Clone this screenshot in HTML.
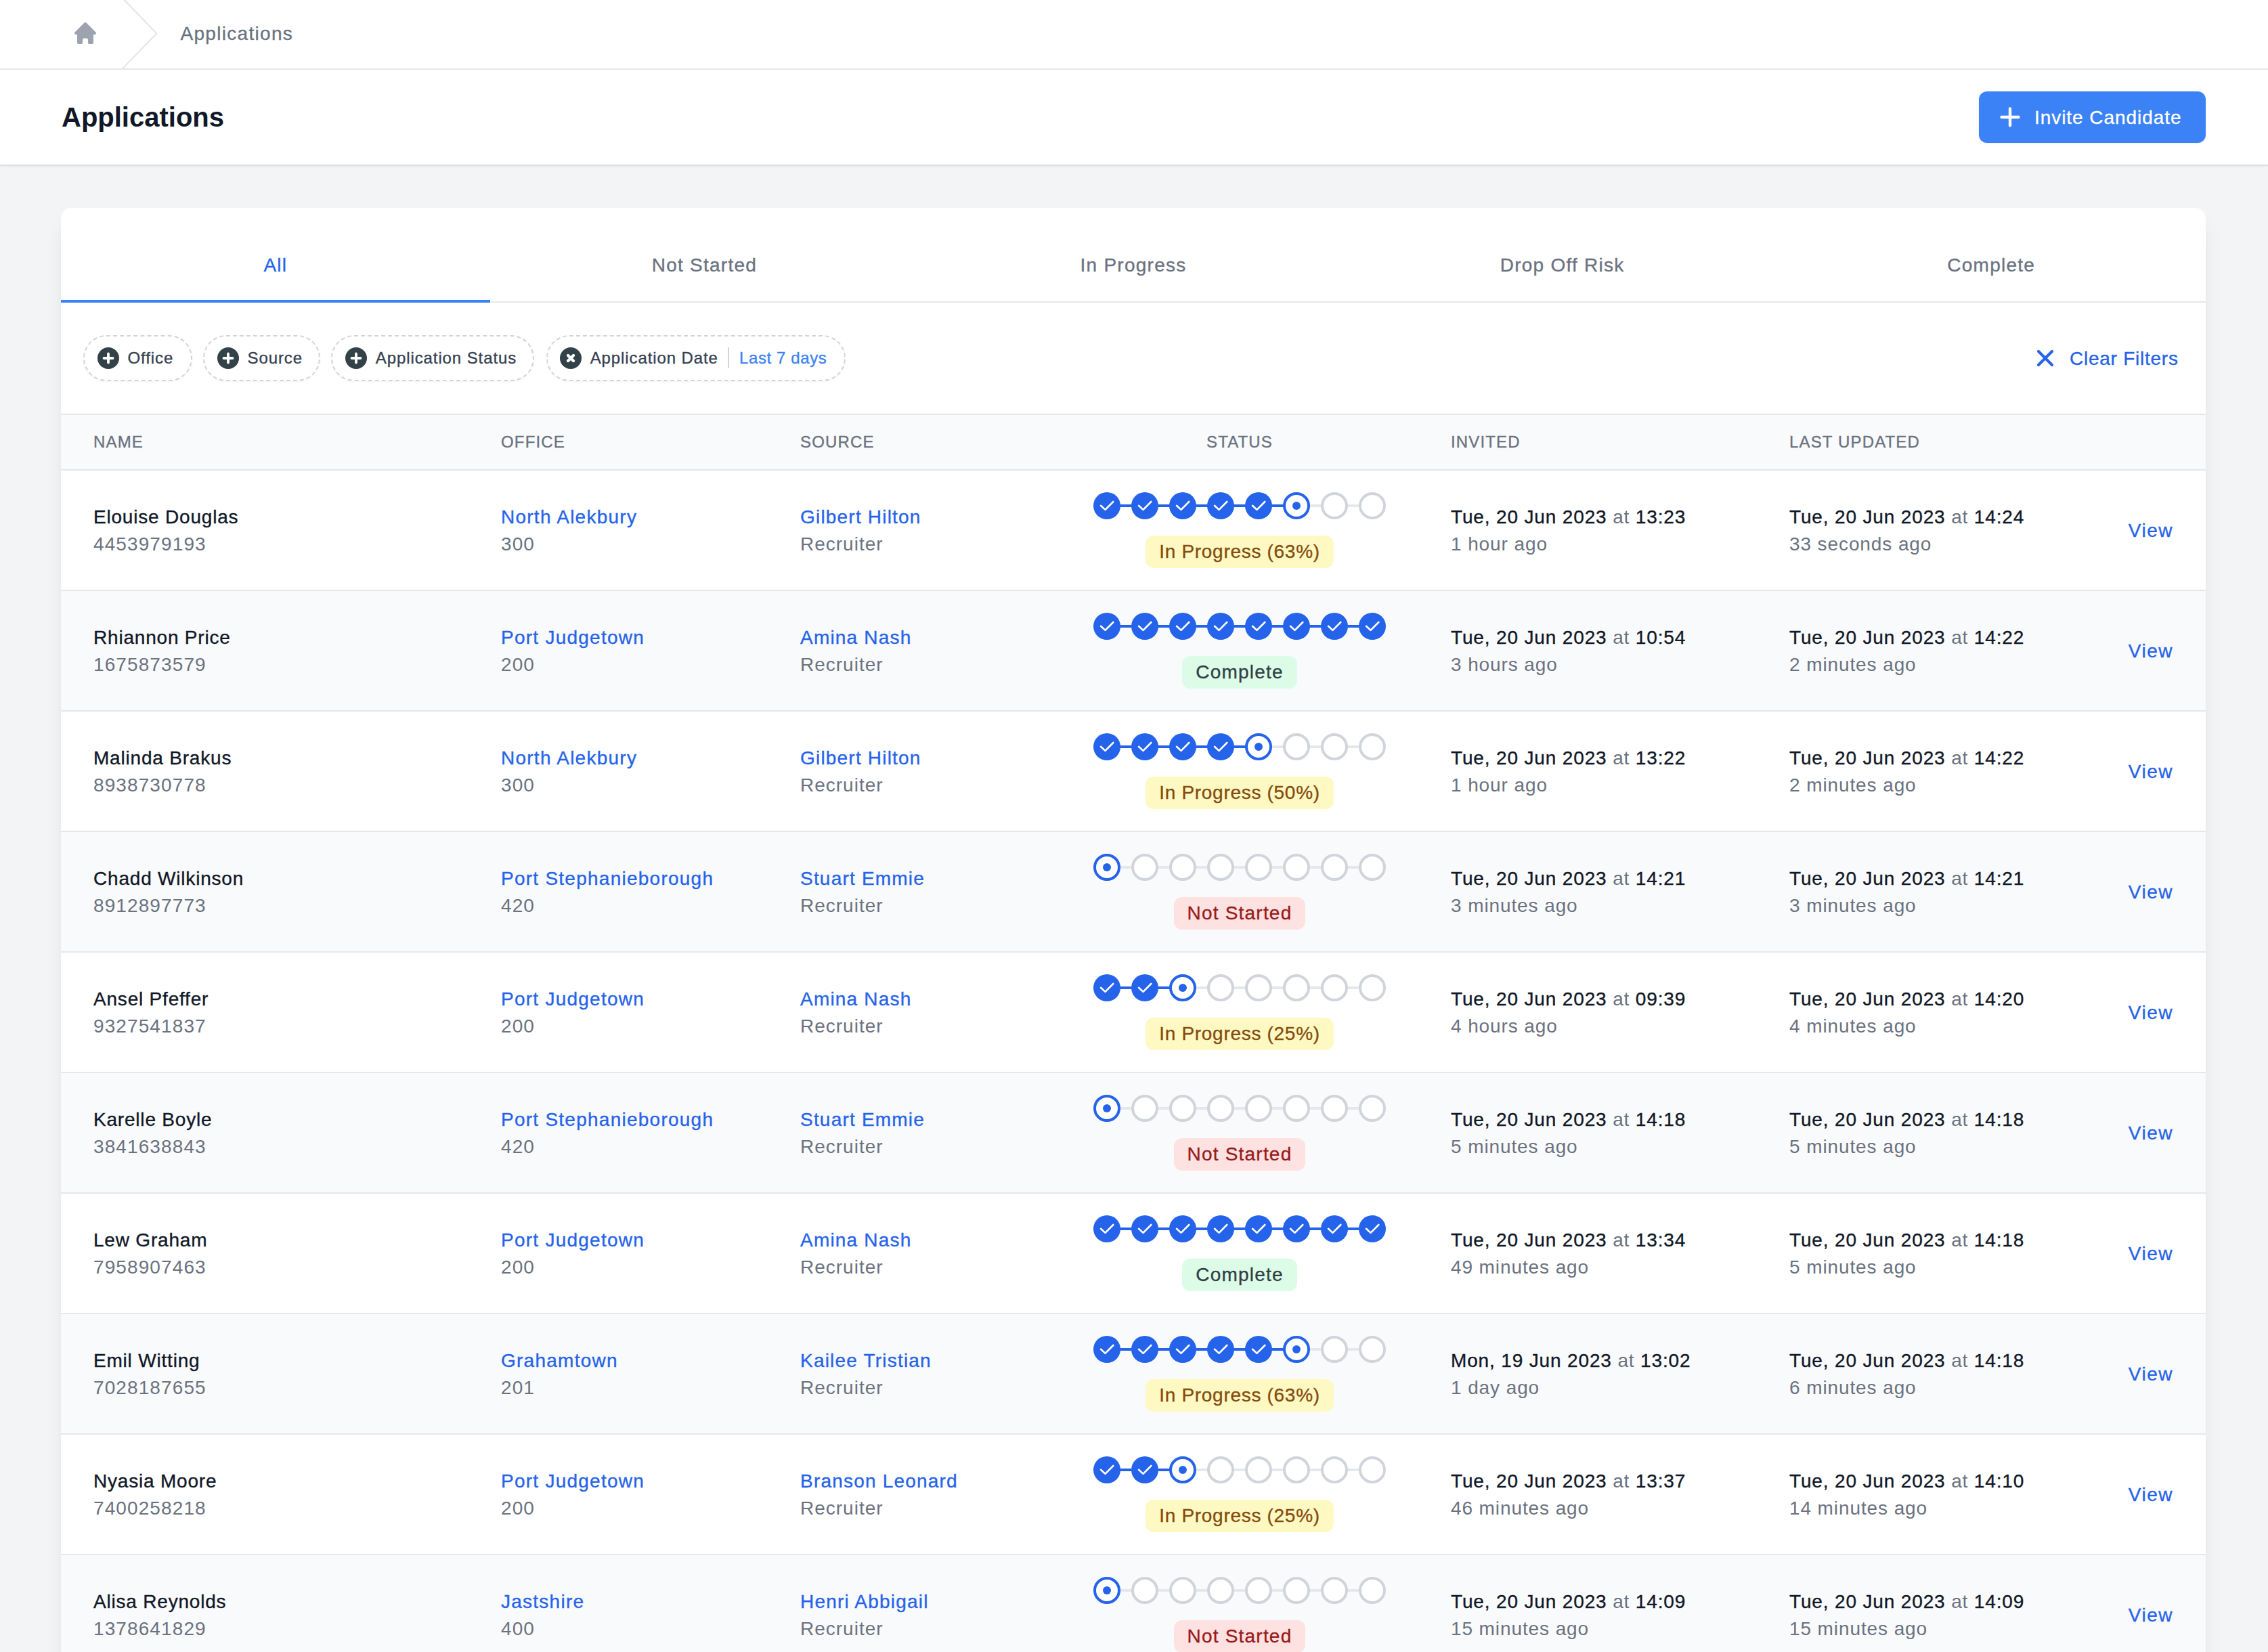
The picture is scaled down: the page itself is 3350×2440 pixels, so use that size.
<!DOCTYPE html><html><head><meta charset="utf-8"><style>
html,body{margin:0;padding:0;width:3350px;height:2440px;overflow:hidden;background:#f3f4f6;}
#root{position:relative;width:3350px;height:2440px;overflow:hidden;}
body{width:3350px;height:2440px;overflow:hidden;position:relative;background:#f3f4f6;font-family:"Liberation Sans", sans-serif;}
.t{position:absolute;white-space:nowrap;}
#nav{position:absolute;left:0;top:0;width:3350px;height:101px;background:#fff;border-bottom:2px solid #e5e7eb;}
#hdr{position:absolute;left:0;top:103px;width:3350px;height:140px;background:#fff;border-bottom:2px solid #dcdfe3;box-shadow:0 2px 3px rgba(0,0,0,0.03);}
#btn{position:absolute;left:2923px;top:135px;width:335px;height:76px;background:#3b82f6;border-radius:12px;box-shadow:0 1px 3px rgba(0,0,0,0.08);}
#card{position:absolute;left:90px;top:307px;width:3168px;height:2200px;background:#fff;border-radius:16px;box-shadow:0 20px 30px -6px rgba(0,0,0,0.09),0 8px 12px -8px rgba(0,0,0,0.1);}
.chip{position:absolute;top:495px;height:68px;border:2px dashed #d1d5db;border-radius:34px;background:#fff;box-shadow:0 1px 3px rgba(0,0,0,0.05);box-sizing:border-box;}
.ci{position:absolute;}
.bw{position:absolute;left:831px;width:2000px;text-align:center;height:48px;}
.badge{-webkit-text-stroke:0.35px currentColor;display:inline-block;height:48px;line-height:48px;font-size:28px;padding:0 20px;border-radius:12px;white-space:nowrap;}
</style></head><body><div id="root"><div id="nav"></div>
<svg style="position:absolute;left:0;top:0" width="300" height="103"><polyline points="182.7,-1 231.3,49.5 180.3,102" fill="none" stroke="#e5e7eb" stroke-width="2.3"/></svg>
<svg style="position:absolute;left:106px;top:29px" width="40" height="40" viewBox="0 0 20 20" fill="#9ca3af"><path fill-rule="evenodd" d="M9.293 2.293a1 1 0 011.414 0l7 7A1 1 0 0117 11h-1v6a1 1 0 01-1 1h-2a1 1 0 01-1-1v-2a1.2 1.2 0 00-1.2-1.2H9.2a1.2 1.2 0 00-1.2 1.2v2a1 1 0 01-1 1H5a1 1 0 01-1-1v-6H3a1 1 0 01-.707-1.707l7-7z" clip-rule="evenodd"/></svg>
<div class="t" style="left:266.5px;top:29.80px;font-size:28px;line-height:39px;color:#6b7280;font-weight:400;letter-spacing:1.3px;-webkit-text-stroke:0.35px currentColor;">Applications</div>
<div id="hdr"></div>
<div class="t" style="left:91px;top:145.14px;font-size:40px;line-height:56px;color:#111827;font-weight:700;letter-spacing:0px;">Applications</div>
<div id="btn"></div>
<svg style="position:absolute;left:2953px;top:157px" width="32" height="32" viewBox="0 0 32 32"><path d="M16 3.5v25M3.5 16h25" stroke="#fff" stroke-width="4.3" stroke-linecap="round" fill="none"/></svg>
<div class="t" style="left:3005px;top:153.80px;font-size:28px;line-height:39px;color:#ffffff;font-weight:400;letter-spacing:0.95px;-webkit-text-stroke:0.35px currentColor;">Invite Candidate</div>
<div id="card"></div>
<div class="t" style="left:-593.2px;width:2000px;text-align:center;top:371.80px;font-size:28px;line-height:39px;color:#2563eb;font-weight:400;letter-spacing:1.25px;-webkit-text-stroke:0.35px currentColor;">All</div>
<div class="t" style="left:40.40000000000009px;width:2000px;text-align:center;top:371.80px;font-size:28px;line-height:39px;color:#6b7280;font-weight:400;letter-spacing:1.25px;-webkit-text-stroke:0.35px currentColor;">Not Started</div>
<div class="t" style="left:674.0px;width:2000px;text-align:center;top:371.80px;font-size:28px;line-height:39px;color:#6b7280;font-weight:400;letter-spacing:1.25px;-webkit-text-stroke:0.35px currentColor;">In Progress</div>
<div class="t" style="left:1307.6000000000004px;width:2000px;text-align:center;top:371.80px;font-size:28px;line-height:39px;color:#6b7280;font-weight:400;letter-spacing:1.25px;-webkit-text-stroke:0.35px currentColor;">Drop Off Risk</div>
<div class="t" style="left:1941.2000000000003px;width:2000px;text-align:center;top:371.80px;font-size:28px;line-height:39px;color:#6b7280;font-weight:400;letter-spacing:1.25px;-webkit-text-stroke:0.35px currentColor;">Complete</div>
<div style="position:absolute;left:90px;top:445px;width:3168px;height:2px;background:#e5e7eb"></div>
<div style="position:absolute;left:90px;top:443px;width:633.6px;height:4px;background:#3b82f6"></div>
<div class="chip" style="left:122.5px;width:161.3px"></div>
<svg class="ci" style="left:144px;top:513px" width="32" height="32" viewBox="0 0 32 32"><circle cx="16" cy="16" r="16" fill="#334249"/><path d="M16 9.5v13M9.5 16h13" stroke="#fff" stroke-width="3.8" stroke-linecap="round"/></svg>
<div class="t" style="left:188.5px;top:511.68px;font-size:24px;line-height:34px;color:#374151;font-weight:400;letter-spacing:0.9px;-webkit-text-stroke:0.35px currentColor;">Office</div>
<div class="chip" style="left:299.5px;width:173.3px"></div>
<svg class="ci" style="left:321px;top:513px" width="32" height="32" viewBox="0 0 32 32"><circle cx="16" cy="16" r="16" fill="#334249"/><path d="M16 9.5v13M9.5 16h13" stroke="#fff" stroke-width="3.8" stroke-linecap="round"/></svg>
<div class="t" style="left:365.5px;top:511.68px;font-size:24px;line-height:34px;color:#374151;font-weight:400;letter-spacing:0.9px;-webkit-text-stroke:0.35px currentColor;">Source</div>
<div class="chip" style="left:488.8px;width:300.0px"></div>
<svg class="ci" style="left:510px;top:513px" width="32" height="32" viewBox="0 0 32 32"><circle cx="16" cy="16" r="16" fill="#334249"/><path d="M16 9.5v13M9.5 16h13" stroke="#fff" stroke-width="3.8" stroke-linecap="round"/></svg>
<div class="t" style="left:554.8px;top:511.68px;font-size:24px;line-height:34px;color:#374151;font-weight:400;letter-spacing:0.9px;-webkit-text-stroke:0.35px currentColor;">Application Status</div>
<div class="chip" style="left:806.7px;width:441.9px"></div>
<svg class="ci" style="left:827px;top:513px" width="32" height="32" viewBox="0 0 32 32"><circle cx="16" cy="16" r="16" fill="#334249"/><path d="M12 12l8 8M20 12l-8 8" stroke="#fff" stroke-width="4.4" stroke-linecap="round"/></svg>
<div class="t" style="left:871.7px;top:511.68px;font-size:24px;line-height:34px;color:#374151;font-weight:400;letter-spacing:0.9px;-webkit-text-stroke:0.35px currentColor;">Application Date</div>
<div style="position:absolute;left:1075px;top:513px;width:2px;height:31px;background:#d1d5db"></div>
<div class="t" style="left:1092px;top:511.68px;font-size:24px;line-height:34px;color:#3b82f6;font-weight:400;letter-spacing:0.6px;-webkit-text-stroke:0.35px currentColor;">Last 7 days</div>
<svg style="position:absolute;left:3005px;top:513px" width="32" height="32" viewBox="0 0 32 32"><path d="M6 6l20 20M26 6L6 26" stroke="#2563eb" stroke-width="4.2" stroke-linecap="round"/></svg>
<div class="t" style="left:3057px;top:509.80px;font-size:28px;line-height:39px;color:#2563eb;font-weight:400;letter-spacing:0.75px;-webkit-text-stroke:0.35px currentColor;">Clear Filters</div>
<div style="position:absolute;left:90px;top:611px;width:3168px;height:80px;border-top:2px solid #e5e7eb;border-bottom:2px solid #e5e7eb;background:#f9fafb"></div>
<div class="t" style="left:138px;top:635.68px;font-size:24px;line-height:34px;color:#6b7280;font-weight:400;letter-spacing:1.15px;-webkit-text-stroke:0.35px currentColor;">NAME</div>
<div class="t" style="left:740px;top:635.68px;font-size:24px;line-height:34px;color:#6b7280;font-weight:400;letter-spacing:1.15px;-webkit-text-stroke:0.35px currentColor;">OFFICE</div>
<div class="t" style="left:1182px;top:635.68px;font-size:24px;line-height:34px;color:#6b7280;font-weight:400;letter-spacing:1.15px;-webkit-text-stroke:0.35px currentColor;">SOURCE</div>
<div class="t" style="left:831px;width:2000px;text-align:center;top:635.68px;font-size:24px;line-height:34px;color:#6b7280;font-weight:400;letter-spacing:1.15px;-webkit-text-stroke:0.35px currentColor;">STATUS</div>
<div class="t" style="left:2143px;top:635.68px;font-size:24px;line-height:34px;color:#6b7280;font-weight:400;letter-spacing:1.15px;-webkit-text-stroke:0.35px currentColor;">INVITED</div>
<div class="t" style="left:2643px;top:635.68px;font-size:24px;line-height:34px;color:#6b7280;font-weight:400;letter-spacing:1.15px;-webkit-text-stroke:0.35px currentColor;">LAST UPDATED</div>
<div style="position:absolute;left:90px;top:695px;width:3168px;height:176px;background:#ffffff;border-bottom:2px solid #e5e7eb"></div>
<div class="t" style="left:138px;top:743.80px;font-size:28px;line-height:39px;color:#111827;font-weight:400;letter-spacing:0.8px;-webkit-text-stroke:0.35px currentColor;">Elouise Douglas</div>
<div class="t" style="left:138px;top:783.80px;font-size:28px;line-height:39px;color:#6b7280;font-weight:400;letter-spacing:1.1px;">4453979193</div>
<div class="t" style="left:740px;top:743.80px;font-size:28px;line-height:39px;color:#2563eb;font-weight:400;letter-spacing:1.25px;-webkit-text-stroke:0.35px currentColor;">North Alekbury</div>
<div class="t" style="left:740px;top:783.80px;font-size:28px;line-height:39px;color:#6b7280;font-weight:400;letter-spacing:1.1px;">300</div>
<div class="t" style="left:1182px;top:743.80px;font-size:28px;line-height:39px;color:#2563eb;font-weight:400;letter-spacing:1.2px;-webkit-text-stroke:0.35px currentColor;">Gilbert Hilton</div>
<div class="t" style="left:1182px;top:783.80px;font-size:28px;line-height:39px;color:#6b7280;font-weight:400;letter-spacing:1.0px;">Recruiter</div>
<svg style="position:absolute;left:1611.0px;top:723px" width="440" height="48" viewBox="0 0 440 48"><rect x="43" y="22" width="18" height="4" fill="#2563eb"/><rect x="99" y="22" width="18" height="4" fill="#2563eb"/><rect x="155" y="22" width="18" height="4" fill="#2563eb"/><rect x="211" y="22" width="18" height="4" fill="#2563eb"/><rect x="267" y="22" width="18" height="4" fill="#2563eb"/><rect x="323" y="22" width="18" height="4" fill="#e5e7eb"/><rect x="379" y="22" width="18" height="4" fill="#e5e7eb"/><circle cx="24" cy="24" r="20" fill="#2563eb"/><path d="M15 23.8l6.5 6.1 11.8-11.9" stroke="#fff" stroke-width="2.6" stroke-linecap="round" stroke-linejoin="round" fill="none"/><circle cx="80" cy="24" r="20" fill="#2563eb"/><path d="M71 23.8l6.5 6.1 11.8-11.9" stroke="#fff" stroke-width="2.6" stroke-linecap="round" stroke-linejoin="round" fill="none"/><circle cx="136" cy="24" r="20" fill="#2563eb"/><path d="M127 23.8l6.5 6.1 11.8-11.9" stroke="#fff" stroke-width="2.6" stroke-linecap="round" stroke-linejoin="round" fill="none"/><circle cx="192" cy="24" r="20" fill="#2563eb"/><path d="M183 23.8l6.5 6.1 11.8-11.9" stroke="#fff" stroke-width="2.6" stroke-linecap="round" stroke-linejoin="round" fill="none"/><circle cx="248" cy="24" r="20" fill="#2563eb"/><path d="M239 23.8l6.5 6.1 11.8-11.9" stroke="#fff" stroke-width="2.6" stroke-linecap="round" stroke-linejoin="round" fill="none"/><circle cx="304" cy="24" r="18" fill="#fff" stroke="#2563eb" stroke-width="4"/><circle cx="304" cy="24" r="6" fill="#2563eb"/><circle cx="360" cy="24" r="18" fill="#fff" stroke="#d1d5db" stroke-width="4"/><circle cx="416" cy="24" r="18" fill="#fff" stroke="#d1d5db" stroke-width="4"/></svg>
<div class="bw" style="top:791px"><span class="badge" style="background:#fef9c3;color:#854d0e;letter-spacing:0.7px">In Progress (63%)</span></div>
<div class="t" style="left:2143px;top:743.80px;font-size:28px;line-height:39px;color:#111827;font-weight:400;letter-spacing:0.85px;-webkit-text-stroke:0.35px currentColor;">Tue, 20 Jun 2023 <span style="color:#6b7280;-webkit-text-stroke:0">at</span> 13:23</div>
<div class="t" style="left:2143px;top:783.80px;font-size:28px;line-height:39px;color:#6b7280;font-weight:400;letter-spacing:0.9px;">1 hour ago</div>
<div class="t" style="left:2643px;top:743.80px;font-size:28px;line-height:39px;color:#111827;font-weight:400;letter-spacing:0.85px;-webkit-text-stroke:0.35px currentColor;">Tue, 20 Jun 2023 <span style="color:#6b7280;-webkit-text-stroke:0">at</span> 14:24</div>
<div class="t" style="left:2643px;top:783.80px;font-size:28px;line-height:39px;color:#6b7280;font-weight:400;letter-spacing:0.9px;">33 seconds ago</div>
<div class="t" style="right:140px;top:763.80px;font-size:28px;line-height:39px;color:#2563eb;font-weight:400;letter-spacing:1.5px;-webkit-text-stroke:0.35px currentColor;">View</div>
<div style="position:absolute;left:90px;top:873px;width:3168px;height:176px;background:#f9fafb;border-bottom:2px solid #e5e7eb"></div>
<div class="t" style="left:138px;top:921.80px;font-size:28px;line-height:39px;color:#111827;font-weight:400;letter-spacing:0.8px;-webkit-text-stroke:0.35px currentColor;">Rhiannon Price</div>
<div class="t" style="left:138px;top:961.80px;font-size:28px;line-height:39px;color:#6b7280;font-weight:400;letter-spacing:1.1px;">1675873579</div>
<div class="t" style="left:740px;top:921.80px;font-size:28px;line-height:39px;color:#2563eb;font-weight:400;letter-spacing:1.25px;-webkit-text-stroke:0.35px currentColor;">Port Judgetown</div>
<div class="t" style="left:740px;top:961.80px;font-size:28px;line-height:39px;color:#6b7280;font-weight:400;letter-spacing:1.1px;">200</div>
<div class="t" style="left:1182px;top:921.80px;font-size:28px;line-height:39px;color:#2563eb;font-weight:400;letter-spacing:1.2px;-webkit-text-stroke:0.35px currentColor;">Amina Nash</div>
<div class="t" style="left:1182px;top:961.80px;font-size:28px;line-height:39px;color:#6b7280;font-weight:400;letter-spacing:1.0px;">Recruiter</div>
<svg style="position:absolute;left:1611.0px;top:901px" width="440" height="48" viewBox="0 0 440 48"><rect x="43" y="22" width="18" height="4" fill="#2563eb"/><rect x="99" y="22" width="18" height="4" fill="#2563eb"/><rect x="155" y="22" width="18" height="4" fill="#2563eb"/><rect x="211" y="22" width="18" height="4" fill="#2563eb"/><rect x="267" y="22" width="18" height="4" fill="#2563eb"/><rect x="323" y="22" width="18" height="4" fill="#2563eb"/><rect x="379" y="22" width="18" height="4" fill="#2563eb"/><circle cx="24" cy="24" r="20" fill="#2563eb"/><path d="M15 23.8l6.5 6.1 11.8-11.9" stroke="#fff" stroke-width="2.6" stroke-linecap="round" stroke-linejoin="round" fill="none"/><circle cx="80" cy="24" r="20" fill="#2563eb"/><path d="M71 23.8l6.5 6.1 11.8-11.9" stroke="#fff" stroke-width="2.6" stroke-linecap="round" stroke-linejoin="round" fill="none"/><circle cx="136" cy="24" r="20" fill="#2563eb"/><path d="M127 23.8l6.5 6.1 11.8-11.9" stroke="#fff" stroke-width="2.6" stroke-linecap="round" stroke-linejoin="round" fill="none"/><circle cx="192" cy="24" r="20" fill="#2563eb"/><path d="M183 23.8l6.5 6.1 11.8-11.9" stroke="#fff" stroke-width="2.6" stroke-linecap="round" stroke-linejoin="round" fill="none"/><circle cx="248" cy="24" r="20" fill="#2563eb"/><path d="M239 23.8l6.5 6.1 11.8-11.9" stroke="#fff" stroke-width="2.6" stroke-linecap="round" stroke-linejoin="round" fill="none"/><circle cx="304" cy="24" r="20" fill="#2563eb"/><path d="M295 23.8l6.5 6.1 11.8-11.9" stroke="#fff" stroke-width="2.6" stroke-linecap="round" stroke-linejoin="round" fill="none"/><circle cx="360" cy="24" r="20" fill="#2563eb"/><path d="M351 23.8l6.5 6.1 11.8-11.9" stroke="#fff" stroke-width="2.6" stroke-linecap="round" stroke-linejoin="round" fill="none"/><circle cx="416" cy="24" r="20" fill="#2563eb"/><path d="M407 23.8l6.5 6.1 11.8-11.9" stroke="#fff" stroke-width="2.6" stroke-linecap="round" stroke-linejoin="round" fill="none"/></svg>
<div class="bw" style="top:969px"><span class="badge" style="background:#dcfce7;color:#313e46;letter-spacing:1.2px">Complete</span></div>
<div class="t" style="left:2143px;top:921.80px;font-size:28px;line-height:39px;color:#111827;font-weight:400;letter-spacing:0.85px;-webkit-text-stroke:0.35px currentColor;">Tue, 20 Jun 2023 <span style="color:#6b7280;-webkit-text-stroke:0">at</span> 10:54</div>
<div class="t" style="left:2143px;top:961.80px;font-size:28px;line-height:39px;color:#6b7280;font-weight:400;letter-spacing:0.9px;">3 hours ago</div>
<div class="t" style="left:2643px;top:921.80px;font-size:28px;line-height:39px;color:#111827;font-weight:400;letter-spacing:0.85px;-webkit-text-stroke:0.35px currentColor;">Tue, 20 Jun 2023 <span style="color:#6b7280;-webkit-text-stroke:0">at</span> 14:22</div>
<div class="t" style="left:2643px;top:961.80px;font-size:28px;line-height:39px;color:#6b7280;font-weight:400;letter-spacing:0.9px;">2 minutes ago</div>
<div class="t" style="right:140px;top:941.80px;font-size:28px;line-height:39px;color:#2563eb;font-weight:400;letter-spacing:1.5px;-webkit-text-stroke:0.35px currentColor;">View</div>
<div style="position:absolute;left:90px;top:1051px;width:3168px;height:176px;background:#ffffff;border-bottom:2px solid #e5e7eb"></div>
<div class="t" style="left:138px;top:1099.80px;font-size:28px;line-height:39px;color:#111827;font-weight:400;letter-spacing:0.8px;-webkit-text-stroke:0.35px currentColor;">Malinda Brakus</div>
<div class="t" style="left:138px;top:1139.80px;font-size:28px;line-height:39px;color:#6b7280;font-weight:400;letter-spacing:1.1px;">8938730778</div>
<div class="t" style="left:740px;top:1099.80px;font-size:28px;line-height:39px;color:#2563eb;font-weight:400;letter-spacing:1.25px;-webkit-text-stroke:0.35px currentColor;">North Alekbury</div>
<div class="t" style="left:740px;top:1139.80px;font-size:28px;line-height:39px;color:#6b7280;font-weight:400;letter-spacing:1.1px;">300</div>
<div class="t" style="left:1182px;top:1099.80px;font-size:28px;line-height:39px;color:#2563eb;font-weight:400;letter-spacing:1.2px;-webkit-text-stroke:0.35px currentColor;">Gilbert Hilton</div>
<div class="t" style="left:1182px;top:1139.80px;font-size:28px;line-height:39px;color:#6b7280;font-weight:400;letter-spacing:1.0px;">Recruiter</div>
<svg style="position:absolute;left:1611.0px;top:1079px" width="440" height="48" viewBox="0 0 440 48"><rect x="43" y="22" width="18" height="4" fill="#2563eb"/><rect x="99" y="22" width="18" height="4" fill="#2563eb"/><rect x="155" y="22" width="18" height="4" fill="#2563eb"/><rect x="211" y="22" width="18" height="4" fill="#2563eb"/><rect x="267" y="22" width="18" height="4" fill="#e5e7eb"/><rect x="323" y="22" width="18" height="4" fill="#e5e7eb"/><rect x="379" y="22" width="18" height="4" fill="#e5e7eb"/><circle cx="24" cy="24" r="20" fill="#2563eb"/><path d="M15 23.8l6.5 6.1 11.8-11.9" stroke="#fff" stroke-width="2.6" stroke-linecap="round" stroke-linejoin="round" fill="none"/><circle cx="80" cy="24" r="20" fill="#2563eb"/><path d="M71 23.8l6.5 6.1 11.8-11.9" stroke="#fff" stroke-width="2.6" stroke-linecap="round" stroke-linejoin="round" fill="none"/><circle cx="136" cy="24" r="20" fill="#2563eb"/><path d="M127 23.8l6.5 6.1 11.8-11.9" stroke="#fff" stroke-width="2.6" stroke-linecap="round" stroke-linejoin="round" fill="none"/><circle cx="192" cy="24" r="20" fill="#2563eb"/><path d="M183 23.8l6.5 6.1 11.8-11.9" stroke="#fff" stroke-width="2.6" stroke-linecap="round" stroke-linejoin="round" fill="none"/><circle cx="248" cy="24" r="18" fill="#fff" stroke="#2563eb" stroke-width="4"/><circle cx="248" cy="24" r="6" fill="#2563eb"/><circle cx="304" cy="24" r="18" fill="#fff" stroke="#d1d5db" stroke-width="4"/><circle cx="360" cy="24" r="18" fill="#fff" stroke="#d1d5db" stroke-width="4"/><circle cx="416" cy="24" r="18" fill="#fff" stroke="#d1d5db" stroke-width="4"/></svg>
<div class="bw" style="top:1147px"><span class="badge" style="background:#fef9c3;color:#854d0e;letter-spacing:0.7px">In Progress (50%)</span></div>
<div class="t" style="left:2143px;top:1099.80px;font-size:28px;line-height:39px;color:#111827;font-weight:400;letter-spacing:0.85px;-webkit-text-stroke:0.35px currentColor;">Tue, 20 Jun 2023 <span style="color:#6b7280;-webkit-text-stroke:0">at</span> 13:22</div>
<div class="t" style="left:2143px;top:1139.80px;font-size:28px;line-height:39px;color:#6b7280;font-weight:400;letter-spacing:0.9px;">1 hour ago</div>
<div class="t" style="left:2643px;top:1099.80px;font-size:28px;line-height:39px;color:#111827;font-weight:400;letter-spacing:0.85px;-webkit-text-stroke:0.35px currentColor;">Tue, 20 Jun 2023 <span style="color:#6b7280;-webkit-text-stroke:0">at</span> 14:22</div>
<div class="t" style="left:2643px;top:1139.80px;font-size:28px;line-height:39px;color:#6b7280;font-weight:400;letter-spacing:0.9px;">2 minutes ago</div>
<div class="t" style="right:140px;top:1119.80px;font-size:28px;line-height:39px;color:#2563eb;font-weight:400;letter-spacing:1.5px;-webkit-text-stroke:0.35px currentColor;">View</div>
<div style="position:absolute;left:90px;top:1229px;width:3168px;height:176px;background:#f9fafb;border-bottom:2px solid #e5e7eb"></div>
<div class="t" style="left:138px;top:1277.80px;font-size:28px;line-height:39px;color:#111827;font-weight:400;letter-spacing:0.8px;-webkit-text-stroke:0.35px currentColor;">Chadd Wilkinson</div>
<div class="t" style="left:138px;top:1317.80px;font-size:28px;line-height:39px;color:#6b7280;font-weight:400;letter-spacing:1.1px;">8912897773</div>
<div class="t" style="left:740px;top:1277.80px;font-size:28px;line-height:39px;color:#2563eb;font-weight:400;letter-spacing:1.25px;-webkit-text-stroke:0.35px currentColor;">Port Stephanieborough</div>
<div class="t" style="left:740px;top:1317.80px;font-size:28px;line-height:39px;color:#6b7280;font-weight:400;letter-spacing:1.1px;">420</div>
<div class="t" style="left:1182px;top:1277.80px;font-size:28px;line-height:39px;color:#2563eb;font-weight:400;letter-spacing:1.2px;-webkit-text-stroke:0.35px currentColor;">Stuart Emmie</div>
<div class="t" style="left:1182px;top:1317.80px;font-size:28px;line-height:39px;color:#6b7280;font-weight:400;letter-spacing:1.0px;">Recruiter</div>
<svg style="position:absolute;left:1611.0px;top:1257px" width="440" height="48" viewBox="0 0 440 48"><rect x="43" y="22" width="18" height="4" fill="#e5e7eb"/><rect x="99" y="22" width="18" height="4" fill="#e5e7eb"/><rect x="155" y="22" width="18" height="4" fill="#e5e7eb"/><rect x="211" y="22" width="18" height="4" fill="#e5e7eb"/><rect x="267" y="22" width="18" height="4" fill="#e5e7eb"/><rect x="323" y="22" width="18" height="4" fill="#e5e7eb"/><rect x="379" y="22" width="18" height="4" fill="#e5e7eb"/><circle cx="24" cy="24" r="18" fill="#fff" stroke="#2563eb" stroke-width="4"/><circle cx="24" cy="24" r="6" fill="#2563eb"/><circle cx="80" cy="24" r="18" fill="#fff" stroke="#d1d5db" stroke-width="4"/><circle cx="136" cy="24" r="18" fill="#fff" stroke="#d1d5db" stroke-width="4"/><circle cx="192" cy="24" r="18" fill="#fff" stroke="#d1d5db" stroke-width="4"/><circle cx="248" cy="24" r="18" fill="#fff" stroke="#d1d5db" stroke-width="4"/><circle cx="304" cy="24" r="18" fill="#fff" stroke="#d1d5db" stroke-width="4"/><circle cx="360" cy="24" r="18" fill="#fff" stroke="#d1d5db" stroke-width="4"/><circle cx="416" cy="24" r="18" fill="#fff" stroke="#d1d5db" stroke-width="4"/></svg>
<div class="bw" style="top:1325px"><span class="badge" style="background:#fee2e2;color:#991b1b;letter-spacing:1.2px">Not Started</span></div>
<div class="t" style="left:2143px;top:1277.80px;font-size:28px;line-height:39px;color:#111827;font-weight:400;letter-spacing:0.85px;-webkit-text-stroke:0.35px currentColor;">Tue, 20 Jun 2023 <span style="color:#6b7280;-webkit-text-stroke:0">at</span> 14:21</div>
<div class="t" style="left:2143px;top:1317.80px;font-size:28px;line-height:39px;color:#6b7280;font-weight:400;letter-spacing:0.9px;">3 minutes ago</div>
<div class="t" style="left:2643px;top:1277.80px;font-size:28px;line-height:39px;color:#111827;font-weight:400;letter-spacing:0.85px;-webkit-text-stroke:0.35px currentColor;">Tue, 20 Jun 2023 <span style="color:#6b7280;-webkit-text-stroke:0">at</span> 14:21</div>
<div class="t" style="left:2643px;top:1317.80px;font-size:28px;line-height:39px;color:#6b7280;font-weight:400;letter-spacing:0.9px;">3 minutes ago</div>
<div class="t" style="right:140px;top:1297.80px;font-size:28px;line-height:39px;color:#2563eb;font-weight:400;letter-spacing:1.5px;-webkit-text-stroke:0.35px currentColor;">View</div>
<div style="position:absolute;left:90px;top:1407px;width:3168px;height:176px;background:#ffffff;border-bottom:2px solid #e5e7eb"></div>
<div class="t" style="left:138px;top:1455.80px;font-size:28px;line-height:39px;color:#111827;font-weight:400;letter-spacing:0.8px;-webkit-text-stroke:0.35px currentColor;">Ansel Pfeffer</div>
<div class="t" style="left:138px;top:1495.80px;font-size:28px;line-height:39px;color:#6b7280;font-weight:400;letter-spacing:1.1px;">9327541837</div>
<div class="t" style="left:740px;top:1455.80px;font-size:28px;line-height:39px;color:#2563eb;font-weight:400;letter-spacing:1.25px;-webkit-text-stroke:0.35px currentColor;">Port Judgetown</div>
<div class="t" style="left:740px;top:1495.80px;font-size:28px;line-height:39px;color:#6b7280;font-weight:400;letter-spacing:1.1px;">200</div>
<div class="t" style="left:1182px;top:1455.80px;font-size:28px;line-height:39px;color:#2563eb;font-weight:400;letter-spacing:1.2px;-webkit-text-stroke:0.35px currentColor;">Amina Nash</div>
<div class="t" style="left:1182px;top:1495.80px;font-size:28px;line-height:39px;color:#6b7280;font-weight:400;letter-spacing:1.0px;">Recruiter</div>
<svg style="position:absolute;left:1611.0px;top:1435px" width="440" height="48" viewBox="0 0 440 48"><rect x="43" y="22" width="18" height="4" fill="#2563eb"/><rect x="99" y="22" width="18" height="4" fill="#2563eb"/><rect x="155" y="22" width="18" height="4" fill="#e5e7eb"/><rect x="211" y="22" width="18" height="4" fill="#e5e7eb"/><rect x="267" y="22" width="18" height="4" fill="#e5e7eb"/><rect x="323" y="22" width="18" height="4" fill="#e5e7eb"/><rect x="379" y="22" width="18" height="4" fill="#e5e7eb"/><circle cx="24" cy="24" r="20" fill="#2563eb"/><path d="M15 23.8l6.5 6.1 11.8-11.9" stroke="#fff" stroke-width="2.6" stroke-linecap="round" stroke-linejoin="round" fill="none"/><circle cx="80" cy="24" r="20" fill="#2563eb"/><path d="M71 23.8l6.5 6.1 11.8-11.9" stroke="#fff" stroke-width="2.6" stroke-linecap="round" stroke-linejoin="round" fill="none"/><circle cx="136" cy="24" r="18" fill="#fff" stroke="#2563eb" stroke-width="4"/><circle cx="136" cy="24" r="6" fill="#2563eb"/><circle cx="192" cy="24" r="18" fill="#fff" stroke="#d1d5db" stroke-width="4"/><circle cx="248" cy="24" r="18" fill="#fff" stroke="#d1d5db" stroke-width="4"/><circle cx="304" cy="24" r="18" fill="#fff" stroke="#d1d5db" stroke-width="4"/><circle cx="360" cy="24" r="18" fill="#fff" stroke="#d1d5db" stroke-width="4"/><circle cx="416" cy="24" r="18" fill="#fff" stroke="#d1d5db" stroke-width="4"/></svg>
<div class="bw" style="top:1503px"><span class="badge" style="background:#fef9c3;color:#854d0e;letter-spacing:0.7px">In Progress (25%)</span></div>
<div class="t" style="left:2143px;top:1455.80px;font-size:28px;line-height:39px;color:#111827;font-weight:400;letter-spacing:0.85px;-webkit-text-stroke:0.35px currentColor;">Tue, 20 Jun 2023 <span style="color:#6b7280;-webkit-text-stroke:0">at</span> 09:39</div>
<div class="t" style="left:2143px;top:1495.80px;font-size:28px;line-height:39px;color:#6b7280;font-weight:400;letter-spacing:0.9px;">4 hours ago</div>
<div class="t" style="left:2643px;top:1455.80px;font-size:28px;line-height:39px;color:#111827;font-weight:400;letter-spacing:0.85px;-webkit-text-stroke:0.35px currentColor;">Tue, 20 Jun 2023 <span style="color:#6b7280;-webkit-text-stroke:0">at</span> 14:20</div>
<div class="t" style="left:2643px;top:1495.80px;font-size:28px;line-height:39px;color:#6b7280;font-weight:400;letter-spacing:0.9px;">4 minutes ago</div>
<div class="t" style="right:140px;top:1475.80px;font-size:28px;line-height:39px;color:#2563eb;font-weight:400;letter-spacing:1.5px;-webkit-text-stroke:0.35px currentColor;">View</div>
<div style="position:absolute;left:90px;top:1585px;width:3168px;height:176px;background:#f9fafb;border-bottom:2px solid #e5e7eb"></div>
<div class="t" style="left:138px;top:1633.80px;font-size:28px;line-height:39px;color:#111827;font-weight:400;letter-spacing:0.8px;-webkit-text-stroke:0.35px currentColor;">Karelle Boyle</div>
<div class="t" style="left:138px;top:1673.80px;font-size:28px;line-height:39px;color:#6b7280;font-weight:400;letter-spacing:1.1px;">3841638843</div>
<div class="t" style="left:740px;top:1633.80px;font-size:28px;line-height:39px;color:#2563eb;font-weight:400;letter-spacing:1.25px;-webkit-text-stroke:0.35px currentColor;">Port Stephanieborough</div>
<div class="t" style="left:740px;top:1673.80px;font-size:28px;line-height:39px;color:#6b7280;font-weight:400;letter-spacing:1.1px;">420</div>
<div class="t" style="left:1182px;top:1633.80px;font-size:28px;line-height:39px;color:#2563eb;font-weight:400;letter-spacing:1.2px;-webkit-text-stroke:0.35px currentColor;">Stuart Emmie</div>
<div class="t" style="left:1182px;top:1673.80px;font-size:28px;line-height:39px;color:#6b7280;font-weight:400;letter-spacing:1.0px;">Recruiter</div>
<svg style="position:absolute;left:1611.0px;top:1613px" width="440" height="48" viewBox="0 0 440 48"><rect x="43" y="22" width="18" height="4" fill="#e5e7eb"/><rect x="99" y="22" width="18" height="4" fill="#e5e7eb"/><rect x="155" y="22" width="18" height="4" fill="#e5e7eb"/><rect x="211" y="22" width="18" height="4" fill="#e5e7eb"/><rect x="267" y="22" width="18" height="4" fill="#e5e7eb"/><rect x="323" y="22" width="18" height="4" fill="#e5e7eb"/><rect x="379" y="22" width="18" height="4" fill="#e5e7eb"/><circle cx="24" cy="24" r="18" fill="#fff" stroke="#2563eb" stroke-width="4"/><circle cx="24" cy="24" r="6" fill="#2563eb"/><circle cx="80" cy="24" r="18" fill="#fff" stroke="#d1d5db" stroke-width="4"/><circle cx="136" cy="24" r="18" fill="#fff" stroke="#d1d5db" stroke-width="4"/><circle cx="192" cy="24" r="18" fill="#fff" stroke="#d1d5db" stroke-width="4"/><circle cx="248" cy="24" r="18" fill="#fff" stroke="#d1d5db" stroke-width="4"/><circle cx="304" cy="24" r="18" fill="#fff" stroke="#d1d5db" stroke-width="4"/><circle cx="360" cy="24" r="18" fill="#fff" stroke="#d1d5db" stroke-width="4"/><circle cx="416" cy="24" r="18" fill="#fff" stroke="#d1d5db" stroke-width="4"/></svg>
<div class="bw" style="top:1681px"><span class="badge" style="background:#fee2e2;color:#991b1b;letter-spacing:1.2px">Not Started</span></div>
<div class="t" style="left:2143px;top:1633.80px;font-size:28px;line-height:39px;color:#111827;font-weight:400;letter-spacing:0.85px;-webkit-text-stroke:0.35px currentColor;">Tue, 20 Jun 2023 <span style="color:#6b7280;-webkit-text-stroke:0">at</span> 14:18</div>
<div class="t" style="left:2143px;top:1673.80px;font-size:28px;line-height:39px;color:#6b7280;font-weight:400;letter-spacing:0.9px;">5 minutes ago</div>
<div class="t" style="left:2643px;top:1633.80px;font-size:28px;line-height:39px;color:#111827;font-weight:400;letter-spacing:0.85px;-webkit-text-stroke:0.35px currentColor;">Tue, 20 Jun 2023 <span style="color:#6b7280;-webkit-text-stroke:0">at</span> 14:18</div>
<div class="t" style="left:2643px;top:1673.80px;font-size:28px;line-height:39px;color:#6b7280;font-weight:400;letter-spacing:0.9px;">5 minutes ago</div>
<div class="t" style="right:140px;top:1653.80px;font-size:28px;line-height:39px;color:#2563eb;font-weight:400;letter-spacing:1.5px;-webkit-text-stroke:0.35px currentColor;">View</div>
<div style="position:absolute;left:90px;top:1763px;width:3168px;height:176px;background:#ffffff;border-bottom:2px solid #e5e7eb"></div>
<div class="t" style="left:138px;top:1811.80px;font-size:28px;line-height:39px;color:#111827;font-weight:400;letter-spacing:0.8px;-webkit-text-stroke:0.35px currentColor;">Lew Graham</div>
<div class="t" style="left:138px;top:1851.80px;font-size:28px;line-height:39px;color:#6b7280;font-weight:400;letter-spacing:1.1px;">7958907463</div>
<div class="t" style="left:740px;top:1811.80px;font-size:28px;line-height:39px;color:#2563eb;font-weight:400;letter-spacing:1.25px;-webkit-text-stroke:0.35px currentColor;">Port Judgetown</div>
<div class="t" style="left:740px;top:1851.80px;font-size:28px;line-height:39px;color:#6b7280;font-weight:400;letter-spacing:1.1px;">200</div>
<div class="t" style="left:1182px;top:1811.80px;font-size:28px;line-height:39px;color:#2563eb;font-weight:400;letter-spacing:1.2px;-webkit-text-stroke:0.35px currentColor;">Amina Nash</div>
<div class="t" style="left:1182px;top:1851.80px;font-size:28px;line-height:39px;color:#6b7280;font-weight:400;letter-spacing:1.0px;">Recruiter</div>
<svg style="position:absolute;left:1611.0px;top:1791px" width="440" height="48" viewBox="0 0 440 48"><rect x="43" y="22" width="18" height="4" fill="#2563eb"/><rect x="99" y="22" width="18" height="4" fill="#2563eb"/><rect x="155" y="22" width="18" height="4" fill="#2563eb"/><rect x="211" y="22" width="18" height="4" fill="#2563eb"/><rect x="267" y="22" width="18" height="4" fill="#2563eb"/><rect x="323" y="22" width="18" height="4" fill="#2563eb"/><rect x="379" y="22" width="18" height="4" fill="#2563eb"/><circle cx="24" cy="24" r="20" fill="#2563eb"/><path d="M15 23.8l6.5 6.1 11.8-11.9" stroke="#fff" stroke-width="2.6" stroke-linecap="round" stroke-linejoin="round" fill="none"/><circle cx="80" cy="24" r="20" fill="#2563eb"/><path d="M71 23.8l6.5 6.1 11.8-11.9" stroke="#fff" stroke-width="2.6" stroke-linecap="round" stroke-linejoin="round" fill="none"/><circle cx="136" cy="24" r="20" fill="#2563eb"/><path d="M127 23.8l6.5 6.1 11.8-11.9" stroke="#fff" stroke-width="2.6" stroke-linecap="round" stroke-linejoin="round" fill="none"/><circle cx="192" cy="24" r="20" fill="#2563eb"/><path d="M183 23.8l6.5 6.1 11.8-11.9" stroke="#fff" stroke-width="2.6" stroke-linecap="round" stroke-linejoin="round" fill="none"/><circle cx="248" cy="24" r="20" fill="#2563eb"/><path d="M239 23.8l6.5 6.1 11.8-11.9" stroke="#fff" stroke-width="2.6" stroke-linecap="round" stroke-linejoin="round" fill="none"/><circle cx="304" cy="24" r="20" fill="#2563eb"/><path d="M295 23.8l6.5 6.1 11.8-11.9" stroke="#fff" stroke-width="2.6" stroke-linecap="round" stroke-linejoin="round" fill="none"/><circle cx="360" cy="24" r="20" fill="#2563eb"/><path d="M351 23.8l6.5 6.1 11.8-11.9" stroke="#fff" stroke-width="2.6" stroke-linecap="round" stroke-linejoin="round" fill="none"/><circle cx="416" cy="24" r="20" fill="#2563eb"/><path d="M407 23.8l6.5 6.1 11.8-11.9" stroke="#fff" stroke-width="2.6" stroke-linecap="round" stroke-linejoin="round" fill="none"/></svg>
<div class="bw" style="top:1859px"><span class="badge" style="background:#dcfce7;color:#313e46;letter-spacing:1.2px">Complete</span></div>
<div class="t" style="left:2143px;top:1811.80px;font-size:28px;line-height:39px;color:#111827;font-weight:400;letter-spacing:0.85px;-webkit-text-stroke:0.35px currentColor;">Tue, 20 Jun 2023 <span style="color:#6b7280;-webkit-text-stroke:0">at</span> 13:34</div>
<div class="t" style="left:2143px;top:1851.80px;font-size:28px;line-height:39px;color:#6b7280;font-weight:400;letter-spacing:0.9px;">49 minutes ago</div>
<div class="t" style="left:2643px;top:1811.80px;font-size:28px;line-height:39px;color:#111827;font-weight:400;letter-spacing:0.85px;-webkit-text-stroke:0.35px currentColor;">Tue, 20 Jun 2023 <span style="color:#6b7280;-webkit-text-stroke:0">at</span> 14:18</div>
<div class="t" style="left:2643px;top:1851.80px;font-size:28px;line-height:39px;color:#6b7280;font-weight:400;letter-spacing:0.9px;">5 minutes ago</div>
<div class="t" style="right:140px;top:1831.80px;font-size:28px;line-height:39px;color:#2563eb;font-weight:400;letter-spacing:1.5px;-webkit-text-stroke:0.35px currentColor;">View</div>
<div style="position:absolute;left:90px;top:1941px;width:3168px;height:176px;background:#f9fafb;border-bottom:2px solid #e5e7eb"></div>
<div class="t" style="left:138px;top:1989.80px;font-size:28px;line-height:39px;color:#111827;font-weight:400;letter-spacing:0.8px;-webkit-text-stroke:0.35px currentColor;">Emil Witting</div>
<div class="t" style="left:138px;top:2029.80px;font-size:28px;line-height:39px;color:#6b7280;font-weight:400;letter-spacing:1.1px;">7028187655</div>
<div class="t" style="left:740px;top:1989.80px;font-size:28px;line-height:39px;color:#2563eb;font-weight:400;letter-spacing:1.25px;-webkit-text-stroke:0.35px currentColor;">Grahamtown</div>
<div class="t" style="left:740px;top:2029.80px;font-size:28px;line-height:39px;color:#6b7280;font-weight:400;letter-spacing:1.1px;">201</div>
<div class="t" style="left:1182px;top:1989.80px;font-size:28px;line-height:39px;color:#2563eb;font-weight:400;letter-spacing:1.2px;-webkit-text-stroke:0.35px currentColor;">Kailee Tristian</div>
<div class="t" style="left:1182px;top:2029.80px;font-size:28px;line-height:39px;color:#6b7280;font-weight:400;letter-spacing:1.0px;">Recruiter</div>
<svg style="position:absolute;left:1611.0px;top:1969px" width="440" height="48" viewBox="0 0 440 48"><rect x="43" y="22" width="18" height="4" fill="#2563eb"/><rect x="99" y="22" width="18" height="4" fill="#2563eb"/><rect x="155" y="22" width="18" height="4" fill="#2563eb"/><rect x="211" y="22" width="18" height="4" fill="#2563eb"/><rect x="267" y="22" width="18" height="4" fill="#2563eb"/><rect x="323" y="22" width="18" height="4" fill="#e5e7eb"/><rect x="379" y="22" width="18" height="4" fill="#e5e7eb"/><circle cx="24" cy="24" r="20" fill="#2563eb"/><path d="M15 23.8l6.5 6.1 11.8-11.9" stroke="#fff" stroke-width="2.6" stroke-linecap="round" stroke-linejoin="round" fill="none"/><circle cx="80" cy="24" r="20" fill="#2563eb"/><path d="M71 23.8l6.5 6.1 11.8-11.9" stroke="#fff" stroke-width="2.6" stroke-linecap="round" stroke-linejoin="round" fill="none"/><circle cx="136" cy="24" r="20" fill="#2563eb"/><path d="M127 23.8l6.5 6.1 11.8-11.9" stroke="#fff" stroke-width="2.6" stroke-linecap="round" stroke-linejoin="round" fill="none"/><circle cx="192" cy="24" r="20" fill="#2563eb"/><path d="M183 23.8l6.5 6.1 11.8-11.9" stroke="#fff" stroke-width="2.6" stroke-linecap="round" stroke-linejoin="round" fill="none"/><circle cx="248" cy="24" r="20" fill="#2563eb"/><path d="M239 23.8l6.5 6.1 11.8-11.9" stroke="#fff" stroke-width="2.6" stroke-linecap="round" stroke-linejoin="round" fill="none"/><circle cx="304" cy="24" r="18" fill="#fff" stroke="#2563eb" stroke-width="4"/><circle cx="304" cy="24" r="6" fill="#2563eb"/><circle cx="360" cy="24" r="18" fill="#fff" stroke="#d1d5db" stroke-width="4"/><circle cx="416" cy="24" r="18" fill="#fff" stroke="#d1d5db" stroke-width="4"/></svg>
<div class="bw" style="top:2037px"><span class="badge" style="background:#fef9c3;color:#854d0e;letter-spacing:0.7px">In Progress (63%)</span></div>
<div class="t" style="left:2143px;top:1989.80px;font-size:28px;line-height:39px;color:#111827;font-weight:400;letter-spacing:0.85px;-webkit-text-stroke:0.35px currentColor;">Mon, 19 Jun 2023 <span style="color:#6b7280;-webkit-text-stroke:0">at</span> 13:02</div>
<div class="t" style="left:2143px;top:2029.80px;font-size:28px;line-height:39px;color:#6b7280;font-weight:400;letter-spacing:0.9px;">1 day ago</div>
<div class="t" style="left:2643px;top:1989.80px;font-size:28px;line-height:39px;color:#111827;font-weight:400;letter-spacing:0.85px;-webkit-text-stroke:0.35px currentColor;">Tue, 20 Jun 2023 <span style="color:#6b7280;-webkit-text-stroke:0">at</span> 14:18</div>
<div class="t" style="left:2643px;top:2029.80px;font-size:28px;line-height:39px;color:#6b7280;font-weight:400;letter-spacing:0.9px;">6 minutes ago</div>
<div class="t" style="right:140px;top:2009.80px;font-size:28px;line-height:39px;color:#2563eb;font-weight:400;letter-spacing:1.5px;-webkit-text-stroke:0.35px currentColor;">View</div>
<div style="position:absolute;left:90px;top:2119px;width:3168px;height:176px;background:#ffffff;border-bottom:2px solid #e5e7eb"></div>
<div class="t" style="left:138px;top:2167.80px;font-size:28px;line-height:39px;color:#111827;font-weight:400;letter-spacing:0.8px;-webkit-text-stroke:0.35px currentColor;">Nyasia Moore</div>
<div class="t" style="left:138px;top:2207.80px;font-size:28px;line-height:39px;color:#6b7280;font-weight:400;letter-spacing:1.1px;">7400258218</div>
<div class="t" style="left:740px;top:2167.80px;font-size:28px;line-height:39px;color:#2563eb;font-weight:400;letter-spacing:1.25px;-webkit-text-stroke:0.35px currentColor;">Port Judgetown</div>
<div class="t" style="left:740px;top:2207.80px;font-size:28px;line-height:39px;color:#6b7280;font-weight:400;letter-spacing:1.1px;">200</div>
<div class="t" style="left:1182px;top:2167.80px;font-size:28px;line-height:39px;color:#2563eb;font-weight:400;letter-spacing:1.2px;-webkit-text-stroke:0.35px currentColor;">Branson Leonard</div>
<div class="t" style="left:1182px;top:2207.80px;font-size:28px;line-height:39px;color:#6b7280;font-weight:400;letter-spacing:1.0px;">Recruiter</div>
<svg style="position:absolute;left:1611.0px;top:2147px" width="440" height="48" viewBox="0 0 440 48"><rect x="43" y="22" width="18" height="4" fill="#2563eb"/><rect x="99" y="22" width="18" height="4" fill="#2563eb"/><rect x="155" y="22" width="18" height="4" fill="#e5e7eb"/><rect x="211" y="22" width="18" height="4" fill="#e5e7eb"/><rect x="267" y="22" width="18" height="4" fill="#e5e7eb"/><rect x="323" y="22" width="18" height="4" fill="#e5e7eb"/><rect x="379" y="22" width="18" height="4" fill="#e5e7eb"/><circle cx="24" cy="24" r="20" fill="#2563eb"/><path d="M15 23.8l6.5 6.1 11.8-11.9" stroke="#fff" stroke-width="2.6" stroke-linecap="round" stroke-linejoin="round" fill="none"/><circle cx="80" cy="24" r="20" fill="#2563eb"/><path d="M71 23.8l6.5 6.1 11.8-11.9" stroke="#fff" stroke-width="2.6" stroke-linecap="round" stroke-linejoin="round" fill="none"/><circle cx="136" cy="24" r="18" fill="#fff" stroke="#2563eb" stroke-width="4"/><circle cx="136" cy="24" r="6" fill="#2563eb"/><circle cx="192" cy="24" r="18" fill="#fff" stroke="#d1d5db" stroke-width="4"/><circle cx="248" cy="24" r="18" fill="#fff" stroke="#d1d5db" stroke-width="4"/><circle cx="304" cy="24" r="18" fill="#fff" stroke="#d1d5db" stroke-width="4"/><circle cx="360" cy="24" r="18" fill="#fff" stroke="#d1d5db" stroke-width="4"/><circle cx="416" cy="24" r="18" fill="#fff" stroke="#d1d5db" stroke-width="4"/></svg>
<div class="bw" style="top:2215px"><span class="badge" style="background:#fef9c3;color:#854d0e;letter-spacing:0.7px">In Progress (25%)</span></div>
<div class="t" style="left:2143px;top:2167.80px;font-size:28px;line-height:39px;color:#111827;font-weight:400;letter-spacing:0.85px;-webkit-text-stroke:0.35px currentColor;">Tue, 20 Jun 2023 <span style="color:#6b7280;-webkit-text-stroke:0">at</span> 13:37</div>
<div class="t" style="left:2143px;top:2207.80px;font-size:28px;line-height:39px;color:#6b7280;font-weight:400;letter-spacing:0.9px;">46 minutes ago</div>
<div class="t" style="left:2643px;top:2167.80px;font-size:28px;line-height:39px;color:#111827;font-weight:400;letter-spacing:0.85px;-webkit-text-stroke:0.35px currentColor;">Tue, 20 Jun 2023 <span style="color:#6b7280;-webkit-text-stroke:0">at</span> 14:10</div>
<div class="t" style="left:2643px;top:2207.80px;font-size:28px;line-height:39px;color:#6b7280;font-weight:400;letter-spacing:0.9px;">14 minutes ago</div>
<div class="t" style="right:140px;top:2187.80px;font-size:28px;line-height:39px;color:#2563eb;font-weight:400;letter-spacing:1.5px;-webkit-text-stroke:0.35px currentColor;">View</div>
<div style="position:absolute;left:90px;top:2297px;width:3168px;height:176px;background:#f9fafb;border-bottom:2px solid #e5e7eb"></div>
<div class="t" style="left:138px;top:2345.80px;font-size:28px;line-height:39px;color:#111827;font-weight:400;letter-spacing:0.8px;-webkit-text-stroke:0.35px currentColor;">Alisa Reynolds</div>
<div class="t" style="left:138px;top:2385.80px;font-size:28px;line-height:39px;color:#6b7280;font-weight:400;letter-spacing:1.1px;">1378641829</div>
<div class="t" style="left:740px;top:2345.80px;font-size:28px;line-height:39px;color:#2563eb;font-weight:400;letter-spacing:1.25px;-webkit-text-stroke:0.35px currentColor;">Jastshire</div>
<div class="t" style="left:740px;top:2385.80px;font-size:28px;line-height:39px;color:#6b7280;font-weight:400;letter-spacing:1.1px;">400</div>
<div class="t" style="left:1182px;top:2345.80px;font-size:28px;line-height:39px;color:#2563eb;font-weight:400;letter-spacing:1.2px;-webkit-text-stroke:0.35px currentColor;">Henri Abbigail</div>
<div class="t" style="left:1182px;top:2385.80px;font-size:28px;line-height:39px;color:#6b7280;font-weight:400;letter-spacing:1.0px;">Recruiter</div>
<svg style="position:absolute;left:1611.0px;top:2325px" width="440" height="48" viewBox="0 0 440 48"><rect x="43" y="22" width="18" height="4" fill="#e5e7eb"/><rect x="99" y="22" width="18" height="4" fill="#e5e7eb"/><rect x="155" y="22" width="18" height="4" fill="#e5e7eb"/><rect x="211" y="22" width="18" height="4" fill="#e5e7eb"/><rect x="267" y="22" width="18" height="4" fill="#e5e7eb"/><rect x="323" y="22" width="18" height="4" fill="#e5e7eb"/><rect x="379" y="22" width="18" height="4" fill="#e5e7eb"/><circle cx="24" cy="24" r="18" fill="#fff" stroke="#2563eb" stroke-width="4"/><circle cx="24" cy="24" r="6" fill="#2563eb"/><circle cx="80" cy="24" r="18" fill="#fff" stroke="#d1d5db" stroke-width="4"/><circle cx="136" cy="24" r="18" fill="#fff" stroke="#d1d5db" stroke-width="4"/><circle cx="192" cy="24" r="18" fill="#fff" stroke="#d1d5db" stroke-width="4"/><circle cx="248" cy="24" r="18" fill="#fff" stroke="#d1d5db" stroke-width="4"/><circle cx="304" cy="24" r="18" fill="#fff" stroke="#d1d5db" stroke-width="4"/><circle cx="360" cy="24" r="18" fill="#fff" stroke="#d1d5db" stroke-width="4"/><circle cx="416" cy="24" r="18" fill="#fff" stroke="#d1d5db" stroke-width="4"/></svg>
<div class="bw" style="top:2393px"><span class="badge" style="background:#fee2e2;color:#991b1b;letter-spacing:1.2px">Not Started</span></div>
<div class="t" style="left:2143px;top:2345.80px;font-size:28px;line-height:39px;color:#111827;font-weight:400;letter-spacing:0.85px;-webkit-text-stroke:0.35px currentColor;">Tue, 20 Jun 2023 <span style="color:#6b7280;-webkit-text-stroke:0">at</span> 14:09</div>
<div class="t" style="left:2143px;top:2385.80px;font-size:28px;line-height:39px;color:#6b7280;font-weight:400;letter-spacing:0.9px;">15 minutes ago</div>
<div class="t" style="left:2643px;top:2345.80px;font-size:28px;line-height:39px;color:#111827;font-weight:400;letter-spacing:0.85px;-webkit-text-stroke:0.35px currentColor;">Tue, 20 Jun 2023 <span style="color:#6b7280;-webkit-text-stroke:0">at</span> 14:09</div>
<div class="t" style="left:2643px;top:2385.80px;font-size:28px;line-height:39px;color:#6b7280;font-weight:400;letter-spacing:0.9px;">15 minutes ago</div>
<div class="t" style="right:140px;top:2365.80px;font-size:28px;line-height:39px;color:#2563eb;font-weight:400;letter-spacing:1.5px;-webkit-text-stroke:0.35px currentColor;">View</div></div></body></html>
